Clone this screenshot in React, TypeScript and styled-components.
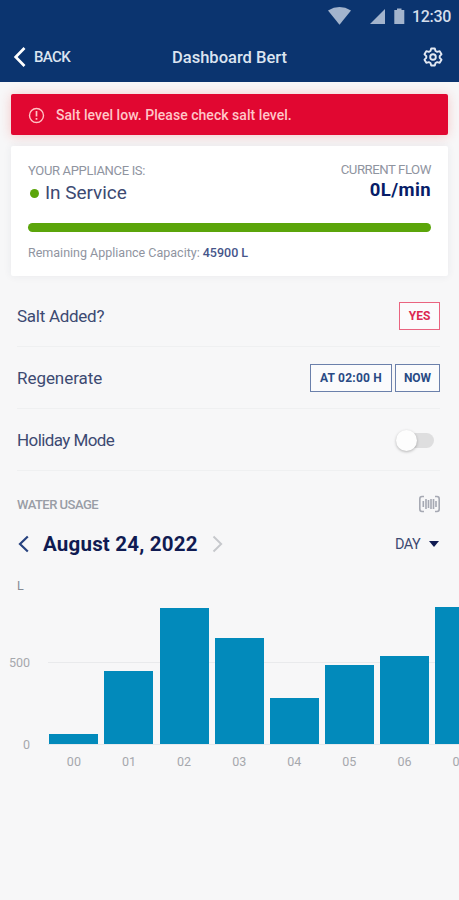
import React from 'react';
import styled, { createGlobalStyle } from 'styled-components';

const navy = '#0b346f';
const ink = '#3d4a72';
const muted = '#8f949f';

const GlobalStyle = createGlobalStyle`
  * { box-sizing: border-box; }
  body {
    margin: 0;
    background: #f7f7f8;
    font-family: Roboto, "Liberation Sans", sans-serif;
    overflow: hidden;
  }
`;

const Screen = styled.div`
  width: 459px;
  height: 900px;
  overflow: hidden;
  background: #f7f7f8;
`;

const Text = styled.span<{ $size: number; $weight?: number; $color?: string; $gap?: number; $line?: number }>`
  display: block;
  white-space: nowrap;
  font-size: ${p => p.$size}px;
  font-weight: ${p => p.$weight ?? 400};
  color: ${p => p.$color ?? ink};
  letter-spacing: ${p => p.$gap ?? 0}px;
  line-height: ${p => (p.$line ? `${p.$line}px` : 'normal')};
`;

const Header = styled.header`
  height: 82px;
  background: ${navy};
`;

const StatusBar = styled.div`
  display: flex;
  justify-content: flex-end;
  align-items: center;
  height: 32px;
  padding-right: 8px;
`;

const StatusIcons = styled.svg`
  display: block;
  margin-right: 6px;
`;

const NavBar = styled.div`
  display: grid;
  grid-template-columns: 1fr auto 1fr;
  align-items: center;
  height: 50px;
  padding: 0 16px 0 13px;
`;

const BackButton = styled.div`
  display: flex;
  align-items: center;
  gap: 7px;
`;

const NavTitle = styled.div`
  padding-left: 3px;
`;

const NavEnd = styled.div`
  display: flex;
  justify-content: flex-end;
`;

const Icon = styled.svg`
  display: block;
  flex: none;
  fill: none;
`;

const Alert = styled.div`
  display: flex;
  align-items: center;
  gap: 11px;
  height: 41px;
  margin: 12px 11px 0;
  padding: 1px 0 0 17px;
  border-radius: 2px;
  background: #e10731;
  box-shadow: 0 1px 12px rgba(240, 50, 40, 0.24);
`;

const Card = styled.section`
  position: relative;
  height: 130px;
  margin: 11px 11px 0;
  padding: 15px 17px 0;
  border-radius: 2px;
  background: #fff;
  box-shadow: 0 0 8px rgba(40, 50, 80, 0.07);
`;

const CardTop = styled.div`
  display: flex;
  justify-content: space-between;
  height: 62px;
`;

const Status = styled.div`
  padding-top: 2px;
`;

const Flow = styled.div`
  display: flex;
  flex-direction: column;
  align-items: flex-end;
  gap: 1px;
  padding-top: 1px;
`;

const StatusValue = styled.div`
  display: flex;
  align-items: center;
  gap: 6px;
  margin-top: 3px;
  padding-left: 2px;
`;

const Dot = styled.i`
  width: 9px;
  height: 9px;
  border-radius: 50%;
  background: #5ba50a;
`;

const Progress = styled.div`
  height: 9px;
  border-radius: 5px;
  background: #5ba50a;
`;

const Capacity = styled.div`
  display: flex;
  gap: 3px;
  margin-top: 12px;
`;

const Settings = styled.section`
  margin: 9px 19px 0 17px;
`;

const SettingRow = styled.div`
  display: flex;
  align-items: center;
  justify-content: space-between;
  height: 62px;
  padding-top: 1px;
  border-bottom: 1px solid #eff0f1;
`;

const ButtonGroup = styled.div`
  display: flex;
  gap: 3px;
`;

const OutlineButton = styled.div<{ $width: number; $tone: 'red' | 'blue' }>`
  display: flex;
  align-items: center;
  justify-content: center;
  width: ${p => p.$width}px;
  height: 28px;
  border: 1px solid ${p => (p.$tone === 'red' ? '#ea6480' : '#6b80ab')};
  background: #fbfbfc;
`;

const Switch = styled.div`
  display: flex;
  align-items: center;
  width: 35px;
  height: 15px;
  margin-right: 6px;
  border-radius: 8px;
  background: linear-gradient(90deg, transparent 10px, #dededf 10px);
`;

const Knob = styled.i`
  width: 21px;
  height: 21px;
  margin-left: -3px;
  border-radius: 50%;
  background: #fdfdfd;
  box-shadow: 0 1px 3px rgba(0, 0, 0, 0.28);
`;

const UsageHeader = styled.div`
  display: flex;
  align-items: center;
  justify-content: space-between;
  height: 28px;
  margin: 19px 18px 0 17px;
`;

const DateBar = styled.div`
  display: flex;
  align-items: center;
  justify-content: space-between;
  height: 30px;
  margin: 11px 19px 0 18px;
`;

const DateNav = styled.div`
  display: flex;
  align-items: center;
  gap: 14px;
`;

const RangePicker = styled.div`
  display: flex;
  align-items: center;
  gap: 8px;
`;

const Unit = styled.div`
  padding: 18px 0 0 17px;
`;

const Chart = styled.div`
  display: grid;
  grid-template-columns: 30px 1fr;
  column-gap: 18px;
  margin-top: 10px;
`;

const Scale = styled.div`
  display: flex;
  flex-direction: column;
  align-items: flex-end;
  justify-content: space-between;
  height: 98px;
  margin: 51px 0 -9px;
`;

const Plot = styled.div`
  display: flex;
  align-items: flex-end;
  gap: 6.1px;
  height: 141px;
  padding-left: 1.4px;
  overflow: hidden;
  border-bottom: 1px solid #e6e9ed;
  background: linear-gradient(#e9eaec, #e9eaec) 0 58px / 100% 1px no-repeat;
`;

const Bar = styled.div<{ $height: number }>`
  flex: none;
  width: 49px;
  height: ${p => p.$height}px;
  background: #028abb;
`;

const Hours = styled.div`
  display: flex;
  gap: 6.1px;
  grid-column: 2;
  margin-top: 9px;
  padding-left: 1.4px;
  overflow: hidden;
`;

const Hour = styled.div`
  display: flex;
  flex: none;
  justify-content: center;
  width: 49px;
`;

const usage = [
  { hour: '00', height: 10.5 },
  { hour: '01', height: 73 },
  { hour: '02', height: 136 },
  { hour: '03', height: 106 },
  { hour: '04', height: 46.5 },
  { hour: '05', height: 79.5 },
  { hour: '06', height: 88 },
  { hour: '07', height: 137 },
];

export default function App() {
  return (
    <Screen>
      <GlobalStyle />
      <Header>
        <StatusBar>
          <StatusIcons width="80" height="20" fill="#a3b4cd">
            <path d="M2 4.400Q13.500-2.400 25 4.400L13.500 18.800Z" />
            <path d="M59 3V18H44Z" />
            <path d="M68.300 4H71V2.400H75.500V4H78.300V18H68.300Z" />
          </StatusIcons>
          <Text $size={16} $weight={500} $color="#d5deeb" $gap={-0.3}>12:30</Text>
        </StatusBar>
        <NavBar>
          <BackButton>
            <Icon width="14" height="22" stroke="#fff" strokeWidth="2.700">
              <path d="M11.500 2L2.700 11L11.500 20" />
            </Icon>
            <Text $size={15} $weight={500} $color="#dce4f0" $gap={-0.65}>BACK</Text>
          </BackButton>
          <NavTitle>
            <Text $size={16.5} $weight={500} $color="#dce4f0">Dashboard Bert</Text>
          </NavTitle>
          <NavEnd>
            <Icon width="20" height="20" viewBox="0 0 20 20" stroke="#e3e9f3" strokeWidth="1.900" strokeLinejoin="round">
              <path d="M8.200 1.500H11.800L12.500 4L14.200 4.900L16.700 4.200L18.500 7.300L16.700 9.200V10.800L18.500 12.700L16.700 15.800L14.200 15.100L12.500 16L11.800 18.500H8.200L7.500 16L5.800 15.100L3.300 15.800L1.500 12.700L3.300 10.800V9.200L1.500 7.300L3.300 4.200L5.800 4.900L7.500 4Z" />
              <circle cx="10" cy="10" r="2.800" />
            </Icon>
          </NavEnd>
        </NavBar>
      </Header>

      <Alert>
        <Icon width="17" height="17" stroke="#ffc3c4" strokeWidth="1.400">
          <circle cx="8.500" cy="8.500" r="7" />
          <path d="M8.500 4V9.500M8.500 11V12.800" strokeWidth="1.700" />
        </Icon>
        <Text $size={14} $weight={500} $color="#ffc6c8" $gap={0.04}>Salt level low. Please check salt level.</Text>
      </Alert>

      <Card>
        <CardTop>
          <Status>
            <Text $size={13} $color={muted} $gap={-0.33} $line={16}>YOUR APPLIANCE IS:</Text>
            <StatusValue>
              <Dot />
              <Text $size={19} $gap={-0.05} $line={22}>In Service</Text>
            </StatusValue>
          </Status>
          <Flow>
            <Text $size={13.2} $color={muted} $gap={-0.45} $line={16}>CURRENT FLOW</Text>
            <Text $size={18.5} $weight={700} $color="#071d68" $gap={0.4} $line={22}>0L/min</Text>
          </Flow>
        </CardTop>
        <Progress />
        <Capacity>
          <Text $size={12.5} $color={muted} $line={17}>Remaining Appliance Capacity:</Text>
          <Text $size={12.5} $weight={500} $color="#46558a" $line={17}>45900 L</Text>
        </Capacity>
      </Card>

      <Settings>
        <SettingRow>
          <Text $size={17} $gap={-0.27}>Salt Added?</Text>
          <OutlineButton $width={41} $tone="red">
            <Text $size={12} $weight={700} $color="#dc2850">YES</Text>
          </OutlineButton>
        </SettingRow>
        <SettingRow>
          <Text $size={17} $gap={-0.05}>Regenerate</Text>
          <ButtonGroup>
            <OutlineButton $width={82} $tone="blue">
              <Text $size={12} $weight={700} $color="#294a84" $gap={0.2}>AT 02:00 H</Text>
            </OutlineButton>
            <OutlineButton $width={45} $tone="blue">
              <Text $size={12} $weight={700} $color="#294a84">NOW</Text>
            </OutlineButton>
          </ButtonGroup>
        </SettingRow>
        <SettingRow>
          <Text $size={17} $gap={-0.58}>Holiday Mode</Text>
          <Switch><Knob /></Switch>
        </SettingRow>
      </Settings>

      <UsageHeader>
        <Text $size={13} $weight={500} $color="#999da6" $gap={-0.52}>WATER USAGE</Text>
        <Icon width="23" height="18" stroke="#a6a9b3" strokeWidth="1.600">
          <path d="M6 1.500H4Q1.800 1.500 1.800 4V14Q1.800 16.500 4 16.500H6M17 1.500H19Q21.200 1.500 21.200 4V14Q21.200 16.500 19 16.500H17M5.300 6V12M8 4V14M10.500 5V13M13 4V14M15.500 4V14M18 6V12" />
        </Icon>
      </UsageHeader>

      <DateBar>
        <DateNav>
          <Icon width="11" height="18" stroke="#27427f" strokeWidth="2.200">
            <path d="M9.800 1.500L2 9L9.800 16.500" />
          </Icon>
          <Text $size={20.5} $weight={700} $color="#101b52" $gap={0.2}>August 24, 2022</Text>
          <Icon width="11" height="18" stroke="#c6c8cc" strokeWidth="1.900">
            <path d="M1.500 1.500L9.200 9L1.500 16.500" />
          </Icon>
        </DateNav>
        <RangePicker>
          <Text $size={14.5} $gap={-0.6}>DAY</Text>
          <Icon width="12" height="8">
            <path d="M1 1H11L6 7Z" fill="#101b52" />
          </Icon>
        </RangePicker>
      </DateBar>

      <Unit>
        <Text $size={12.5} $color="#858a94" $line={17}>L</Text>
      </Unit>
      <Chart>
        <Scale>
          <Text $size={12.5} $color="#a6a8ad" $line={16}>500</Text>
          <Text $size={12.5} $color="#a6a8ad" $line={16}>0</Text>
        </Scale>
        <Plot>
          {usage.map(u => <Bar key={u.hour} $height={u.height} />)}
        </Plot>
        <Hours>
          {usage.map(u => (
            <Hour key={u.hour}>
              <Text $size={12.5} $color="#a6a8ad" $line={16}>{u.hour}</Text>
            </Hour>
          ))}
        </Hours>
      </Chart>
    </Screen>
  );
}
